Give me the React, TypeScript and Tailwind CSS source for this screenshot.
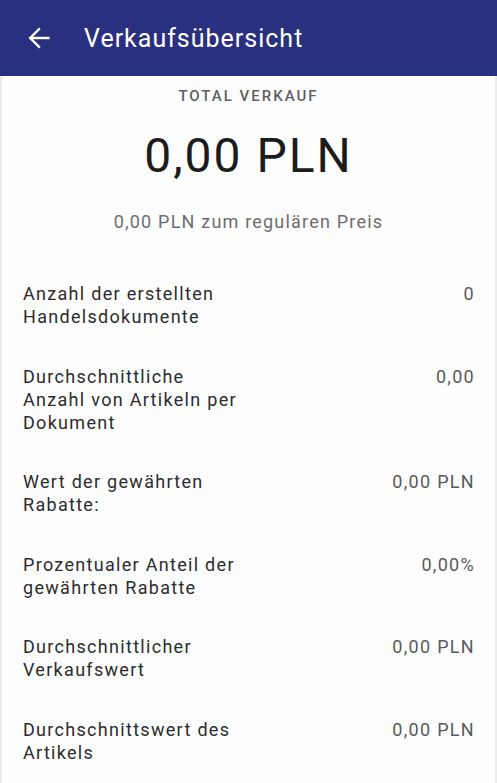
import React from 'react';

const rows = [
  { label: ['Anzahl der erstellten', 'Handelsdokumente'], value: '0' },
  { label: ['Durchschnittliche', 'Anzahl von Artikeln per', 'Dokument'], value: '0,00' },
  { label: ['Wert der gewährten', 'Rabatte:'], value: '0,00 PLN' },
  { label: ['Prozentualer Anteil der', 'gewährten Rabatte'], value: '0,00%' },
  { label: ['Durchschnittlicher', 'Verkaufswert'], value: '0,00 PLN' },
  { label: ['Durchschnittswert des', 'Artikels'], value: '0,00 PLN' },
];

export default function App() {
  return (
    <div className="min-h-screen flex flex-col bg-[#fdfdfd] font-['Roboto',sans-serif]">
      {/* Header */}
      <header className="h-[76px] shrink-0 bg-[#29307f] flex items-center pl-[25px] text-white">
        <svg width="28" height="28" viewBox="0 0 24 24" fill="none" stroke="white" strokeWidth="2.1" strokeLinecap="square">
          <path d="M20 12H5" />
          <path d="M12 4.5 4.5 12l7.5 7.5" />
        </svg>
        <h1 className="ml-[31px] text-[25px] leading-none tracking-[1px]">Verkaufsübersicht</h1>
      </header>

      <div className="flex-1 border-x-2 border-[#ececec]">
        {/* Total */}
        <section className="text-center pt-[10px]">
          <div className="text-[15px] leading-5 font-medium tracking-[2px] text-[#5f5f5f]">TOTAL VERKAUF</div>
          <div className="mt-[22px] text-[48px] leading-[56px] text-[#1c1c1c] tracking-[2px]">0,00 PLN</div>
          <div className="mt-[26px] text-[18px] leading-6 text-[#6d6d6d] tracking-[1.2px]">0,00 PLN zum regulären Preis</div>
        </section>

        {/* Stats */}
        <ul className="mt-[48px] pl-[21px] pr-[20px]">
          {rows.map((row, i) => (
            <li key={i} className="flex justify-between pb-[36.5px] text-[18px] leading-[23px] tracking-[1.3px]">
              <div className="text-[#2c2c2c]">
                {row.label.map((line, j) => (
                  <div key={j} className="whitespace-nowrap">{line}</div>
                ))}
              </div>
              <div className="text-[#5a5a5a]">{row.value}</div>
            </li>
          ))}
        </ul>
      </div>
    </div>
  );
}
